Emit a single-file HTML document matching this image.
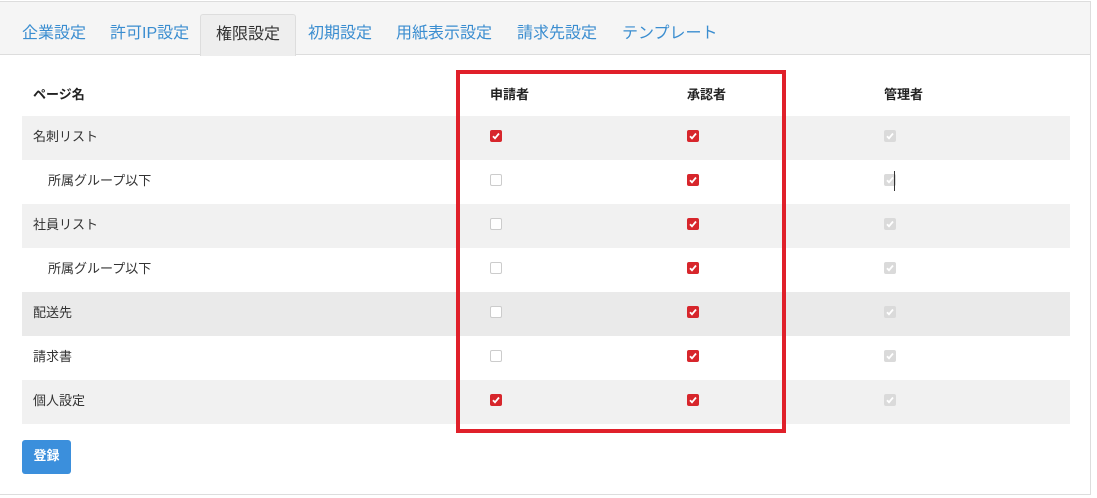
<!DOCTYPE html>
<html><head><meta charset="utf-8"><style>
*{box-sizing:border-box;margin:0;padding:0}
body{width:1097px;height:498px;background:#fff;font-family:"Liberation Sans","Noto Sans CJK JP",sans-serif;position:relative;overflow:hidden;color:#333}
.panel{position:absolute;left:0;top:1px;width:1091px;height:494px;border:1px solid #ddd;border-left:none;background:#fff}
.bar{position:absolute;left:0;top:0;width:1090px;height:53px;background:#f5f5f5;border-bottom:1px solid #ddd}
.tab{position:absolute;top:17px;font-size:16px;color:#3a8dd0;white-space:nowrap}
.tab.act{top:12px;height:42px;background:#eee;border:1px solid #ddd;border-bottom:none;border-radius:3px 3px 0 0;color:#333;padding:5px 15px 0;left:200px;width:96px}
.th{position:absolute;top:84px;font-size:13px;font-weight:bold;color:#222}
.row{position:absolute;left:22px;width:1048px;height:44px;font-size:13px}
.row span{position:absolute;top:10px}
.g{background:#f1f1f1}.h{background:#eaeaea}
.cb{position:absolute;width:12px;height:12px;border-radius:2px}
.on{background:#d7262c}
.off{background:#fff;border:1px solid #ccc}
.dis{background:#dadada}
.cb svg{position:absolute;left:1px;top:1px}
.box{position:absolute;left:456px;top:70px;width:330px;height:363px;border:4px solid #e0202a}
.btn{position:absolute;left:22px;top:440px;width:49px;height:34px;background:#3b8fdc;border-radius:3px;color:#fff;font-size:13px;font-weight:bold;text-align:center;line-height:32px}
</style></head><body>
<div class="panel"><div class="bar">
<div class="tab" style="left:22px">企業設定</div>
<div class="tab" style="left:110px">許可IP設定</div>
<div class="tab act">権限設定</div>
<div class="tab" style="left:308px">初期設定</div>
<div class="tab" style="left:396px">用紙表示設定</div>
<div class="tab" style="left:517px">請求先設定</div>
<div class="tab" style="left:622px">テンプレート</div>
</div></div>
<div class="th" style="left:33px">ページ名</div>
<div class="th" style="left:490px">申請者</div>
<div class="th" style="left:687px">承認者</div>
<div class="th" style="left:884px">管理者</div>

<div class="row g" style="top:116px"><span style="left:11px">名刺リスト</span></div>
<div class="row" style="top:160px"><span style="left:26px">所属グループ以下</span></div>
<div class="row g" style="top:204px"><span style="left:11px">社員リスト</span></div>
<div class="row" style="top:248px"><span style="left:26px">所属グループ以下</span></div>
<div class="row h" style="top:292px"><span style="left:11px">配送先</span></div>
<div class="row" style="top:336px"><span style="left:11px">請求書</span></div>
<div class="row g" style="top:380px"><span style="left:11px">個人設定</span></div>

<div id="cbs"></div>
<div style="position:absolute;left:894px;top:171px;width:1px;height:20px;background:#333"></div>
<div class="box"></div>
<div class="btn">登録</div>
<script>
var s=[["on","on","dis"],["off","on","dis"],["off","on","dis"],["off","on","dis"],["off","on","dis"],["off","on","dis"],["on","on","dis"]];
var xs=[490,687,884],h="";
var ck='<svg width="10" height="10" viewBox="0 0 10 10"><path d="M2 5.2L4 7.3L8 2.5" stroke="#fff" stroke-width="1.8" fill="none"/></svg>';
s.forEach(function(r,i){r.forEach(function(c,j){h+='<div class="cb '+c+'" style="left:'+xs[j]+'px;top:'+(130+i*44)+'px">'+(c!="off"?ck:"")+'</div>'})});
document.getElementById("cbs").innerHTML=h;
</script>
</body></html>
